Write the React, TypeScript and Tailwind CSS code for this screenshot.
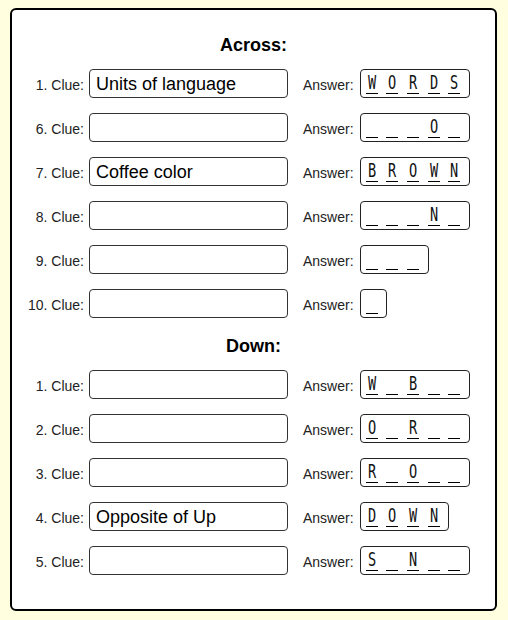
import React from "react";

interface Clue {
  num: number;
  clue: string;
  answer: string;
}

const across: Clue[] = [
  { num: 1, clue: "Units of language", answer: "WORDS" },
  { num: 6, clue: "", answer: "___O_" },
  { num: 7, clue: "Coffee color", answer: "BROWN" },
  { num: 8, clue: "", answer: "___N_" },
  { num: 9, clue: "", answer: "___" },
  { num: 10, clue: "", answer: "_" },
];

const down: Clue[] = [
  { num: 1, clue: "", answer: "W_B__" },
  { num: 2, clue: "", answer: "O_R__" },
  { num: 3, clue: "", answer: "R_O__" },
  { num: 4, clue: "Opposite of Up", answer: "DOWN" },
  { num: 5, clue: "", answer: "S_N__" },
];

function Row({ num, clue, answer }: Clue) {
  return (
    <div className="flex items-center h-[29px]">
      <span className="w-[60px] pt-[4px] text-right text-[14px] text-[#222]">{num}. Clue:</span>
      <div className="ml-[5px] w-[199px] h-[29px] border border-[#333] rounded-[4px] pl-[6px] pt-[1px] flex items-center text-[18px] text-black">
        {clue}
      </div>
      <span className="ml-[15px] pt-[4px] text-[14px] text-[#222]">Answer:</span>
      <div className="ml-[6px] h-[29px] border border-[#222] rounded-[4px] pl-[5px] flex items-end pb-[3px]">
        {answer.split("").map((ch, i) => (
          <span
            key={i}
            className="w-[12px] mr-[8.7px] border-b border-black flex justify-center leading-[20px] pb-[1px]"
          >
            <span className="inline-block text-[20px] font-['DejaVu_Sans_Mono',monospace] scale-x-[0.68] text-[#111]">
              {ch === "_" ? "\u00a0" : ch}
            </span>
          </span>
        ))}
      </div>
    </div>
  );
}

export default function App() {
  return (
    <div className="min-h-[620px] bg-[#ffffe0] pl-[10px] pt-[8px] font-['Liberation_Sans',Arial,sans-serif]">
      <div className="w-[487px] h-[603px] bg-white border-2 border-black rounded-[6px] pl-[12px] pt-[25px]">
        <h2 className="text-center font-bold text-[18px] leading-[20px] pr-[12px]">Across:</h2>
        <div className="mt-[14px] flex flex-col gap-[15px]">
          {across.map((c) => (
            <Row key={"a" + c.num} {...c} />
          ))}
        </div>
        <h2 className="mt-[18px] text-center font-bold text-[18px] leading-[20px] pr-[12px]">Down:</h2>
        <div className="mt-[14px] flex flex-col gap-[15px]">
          {down.map((c) => (
            <Row key={"d" + c.num} {...c} />
          ))}
        </div>
      </div>
    </div>
  );
}
